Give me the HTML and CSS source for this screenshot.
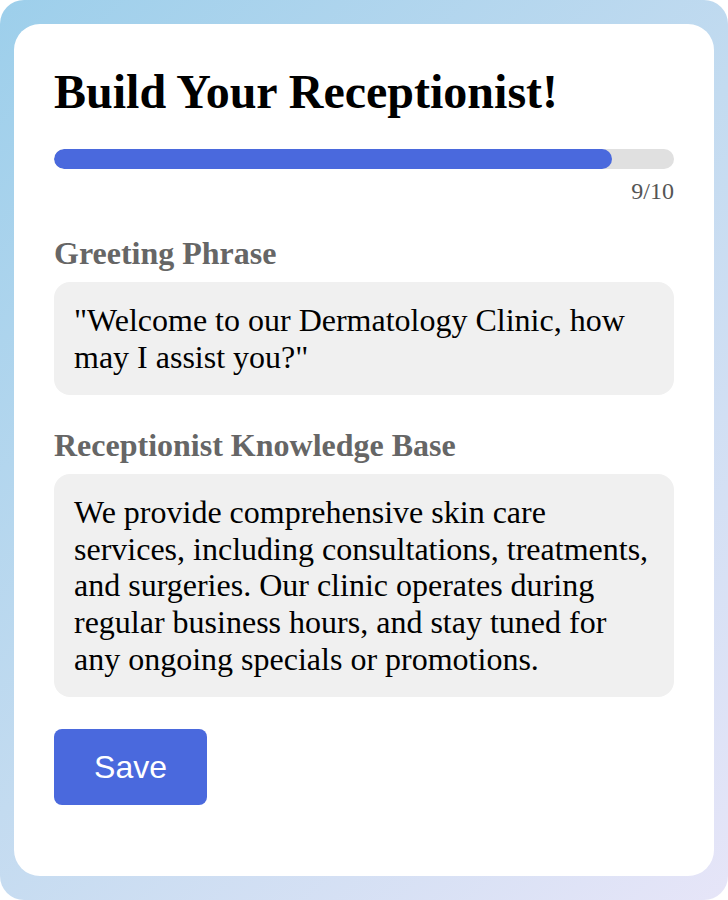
FILE: index.html
```html
<!DOCTYPE html>
<html lang="en">
<head>
    <meta charset="UTF-8">
    <meta name="viewport" content="width=device-width, initial-scale=1.0">
    <title>Build Your Receptionist</title>
    <link rel="stylesheet" href="styles.css">
</head>
<body>
    <div class="page">
        <div class="card">
            <h1>Build Your Receptionist!</h1>

            <!-- progress -->
            <div class="progress">
                <div class="progress-fill" style="width: 90%"></div>
            </div>
            <div class="progress-count">9/10</div>

            <div class="field">
                <label>Greeting Phrase</label>
                <div class="text-box">"Welcome to our Dermatology Clinic, how may I assist you?"</div>
            </div>

            <div class="field">
                <label>Receptionist Knowledge Base</label>
                <div class="text-box">We provide comprehensive skin care services, including consultations, treatments, and surgeries. Our clinic operates during regular business hours, and stay tuned for any ongoing specials or promotions.</div>
            </div>

            <button class="btn">Save</button>
        </div>
    </div>
</body>
</html>
```

FILE: styles.css
```css
html, body {
    margin: 0;
    padding: 0;
    background: #fff;
}
body {
    font-family: "Liberation Serif", "Times New Roman", serif;
}
.page {
    width: 728px;
    height: 900px;
    box-sizing: border-box;
    padding: 24px 14px;
    border-radius: 24px;
    background: linear-gradient(135deg, #9dcfeb 0%, #c3dbf0 50%, #e6e5f8 100%);
}
.card {
    background: #fff;
    border-radius: 26px;
    height: 100%;
    box-sizing: border-box;
    padding: 40px 40px;
}
h1 {
    margin: 0 0 30px;
    font-size: 48px;
    font-weight: bold;
    color: #000;
}
.progress {
    height: 20px;
    background: #e0e0e0;
    border-radius: 10px;
    overflow: hidden;
}
.progress-fill {
    height: 100%;
    background: #4a69dd;
    border-radius: 10px;
}
.progress-count {
    text-align: right;
    font-size: 24px;
    color: #555;
    margin-top: 9px;
}
.field {
    margin-top: 30px;
}
.field + .field {
    margin-top: 32px;
}
label {
    display: block;
    font-size: 32px;
    font-weight: bold;
    color: #666;
    margin-bottom: 10px;
}
.text-box {
    background: #f0f0f0;
    border-radius: 16px;
    padding: 20px;
    font-size: 32px;
    line-height: 36.6px;
    color: #000;
}
.btn {
    margin-top: 32px;
    background: #4a69dd;
    color: #fff;
    border: none;
    border-radius: 8px;
    width: 153px;
    height: 76px;
    font-family: "Liberation Sans", Arial, sans-serif;
    font-size: 32px;
    cursor: pointer;
}
```
